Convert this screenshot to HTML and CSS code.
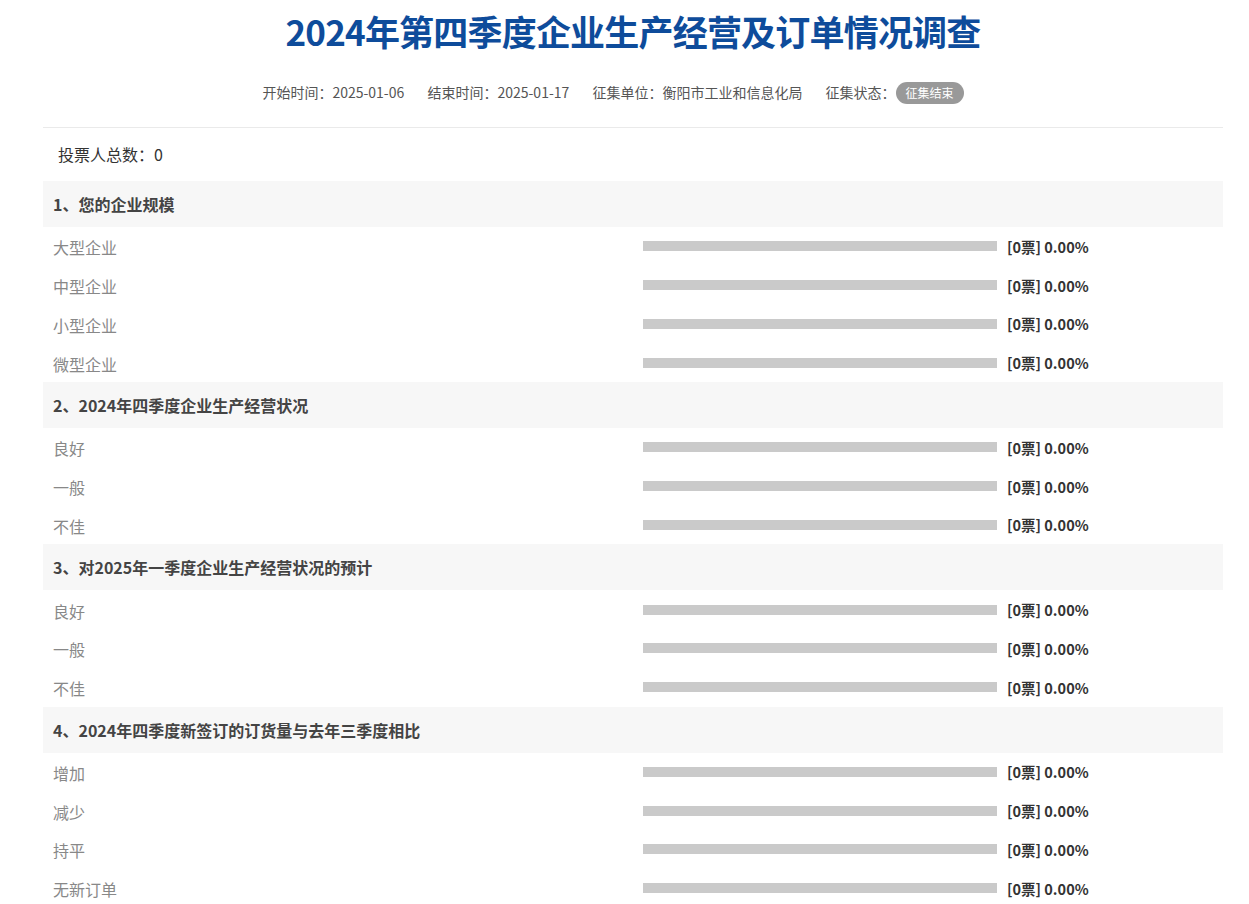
FILE: index.html
```html
<!DOCTYPE html>
<html lang="zh-CN">
<head>
    <meta charset="UTF-8">
    <title>2024年第四季度企业生产经营及订单情况调查</title>
    <link rel="stylesheet" href="styles.css">
</head>
<body>
    <div class="page">
        <h1 class="survey-title">2024年第四季度企业生产经营及订单情况调查</h1>
        <div class="survey-meta">
            <span>开始时间：2025-01-06</span>
            <span>结束时间：2025-01-17</span>
            <span>征集单位：衡阳市工业和信息化局</span>
            <span>征集状态：<em class="status">征集结束</em></span>
        </div>

        <div class="voter-count">投票人总数：0</div>

        <div class="question">
            <div class="question-title">1、您的企业规模</div>
            <div class="option"><span class="option-name">大型企业</span><span class="bar"></span><span class="result">[0票] 0.00%</span></div>
            <div class="option"><span class="option-name">中型企业</span><span class="bar"></span><span class="result">[0票] 0.00%</span></div>
            <div class="option"><span class="option-name">小型企业</span><span class="bar"></span><span class="result">[0票] 0.00%</span></div>
            <div class="option"><span class="option-name">微型企业</span><span class="bar"></span><span class="result">[0票] 0.00%</span></div>
        </div>

        <div class="question">
            <div class="question-title">2、2024年四季度企业生产经营状况</div>
            <div class="option"><span class="option-name">良好</span><span class="bar"></span><span class="result">[0票] 0.00%</span></div>
            <div class="option"><span class="option-name">一般</span><span class="bar"></span><span class="result">[0票] 0.00%</span></div>
            <div class="option"><span class="option-name">不佳</span><span class="bar"></span><span class="result">[0票] 0.00%</span></div>
        </div>

        <div class="question">
            <div class="question-title">3、对2025年一季度企业生产经营状况的预计</div>
            <div class="option"><span class="option-name">良好</span><span class="bar"></span><span class="result">[0票] 0.00%</span></div>
            <div class="option"><span class="option-name">一般</span><span class="bar"></span><span class="result">[0票] 0.00%</span></div>
            <div class="option"><span class="option-name">不佳</span><span class="bar"></span><span class="result">[0票] 0.00%</span></div>
        </div>

        <div class="question">
            <div class="question-title">4、2024年四季度新签订的订货量与去年三季度相比</div>
            <div class="option"><span class="option-name">增加</span><span class="bar"></span><span class="result">[0票] 0.00%</span></div>
            <div class="option"><span class="option-name">减少</span><span class="bar"></span><span class="result">[0票] 0.00%</span></div>
            <div class="option"><span class="option-name">持平</span><span class="bar"></span><span class="result">[0票] 0.00%</span></div>
            <div class="option"><span class="option-name">无新订单</span><span class="bar"></span><span class="result">[0票] 0.00%</span></div>
        </div>
    </div>
</body>
</html>
```

FILE: styles.css
```css
body, html {
    margin: 0;
    padding: 0;
    background: #fff;
    font-family: "Noto Sans CJK SC", "Noto Sans", sans-serif;
    color: #333;
}

.page {
    width: 1180px;
    margin-left: 43px;
}

.survey-title {
    margin: 0;
    padding-top: 6px;
    height: 50px;
    line-height: 50px;
    font-size: 35px;
    font-weight: bold;
    color: #0e4c9b;
    text-align: center;
    letter-spacing: -0.8px;
}

.survey-meta {
    margin-top: 23px;
    height: 26px;
    line-height: 26px;
    font-size: 14px;
    color: #555;
    text-align: center;
    padding-right: 40px;
    padding-bottom: 22px;
    border-bottom: 1px solid #eaeaea;
}

.survey-meta span {
    margin: 0 10px;
}

.status {
    display: inline-block;
    font-style: normal;
    height: 22px;
    line-height: 22px;
    padding: 0 10px;
    font-size: 12px;
    color: #fff;
    background-color: #999;
    border-radius: 11px;
}

.voter-count {
    height: 53px;
    line-height: 53px;
    padding-left: 15px;
    font-size: 16px;
    color: #333;
}

.question-title {
    height: 46px;
    line-height: 46px;
    padding-left: 10px;
    font-size: 16px;
    font-weight: bold;
    color: #444;
    background-color: #f7f7f7;
}

.option {
    display: grid;
    grid-template-columns: 600px 354px auto;
    column-gap: 10px;
    align-items: center;
    height: 38.75px;
}

.option-name {
    padding-left: 10px;
    font-size: 16px;
    color: #888;
    position: relative;
    top: 1px;
}

.option .bar {
    display: block;
    height: 10px;
    background-color: #cacaca;
    margin-left: -10px;
    margin-right: 10px;
}

.result {
    font-size: 14.5px;
    font-weight: bold;
    color: #333;
    margin-left: -10px;
}
```
